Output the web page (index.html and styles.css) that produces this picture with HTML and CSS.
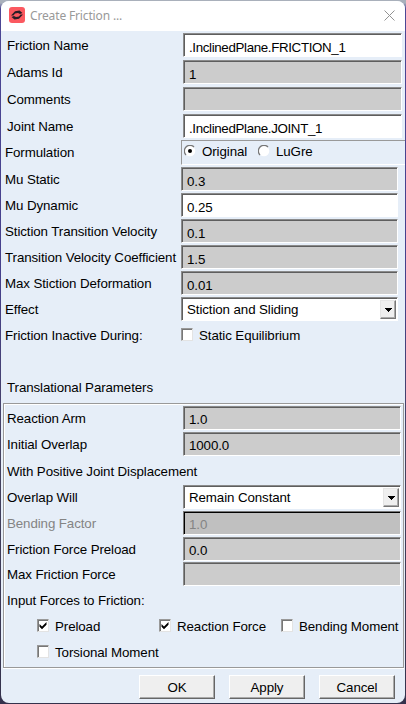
FILE: index.html
```html
<!DOCTYPE html>
<html lang="en">
<head>
<meta charset="utf-8">
<title>Create Friction ...</title>
<link rel="stylesheet" href="styles.css">
</head>
<body>
<main class="window">
  <header class="titlebar">
    <svg class="logo" width="16" height="16" viewBox="0 0 16 16"><rect width="16" height="16" rx="3" fill="#fb5960"/><path d="M2 8.500 6 4.300l4.500-.8L13.500 6l-2.500 1-2-1-3 .6L4.500 8.500z M14 7.500 10 11.700l-4.500.8L2.500 10l2.500-1 2 1 3-.6 1.500-1.900z" fill="#281e27"/></svg>
    <h1 class="title">Create Friction ...</h1>
    <svg class="close" width="11" height="11" viewBox="0 0 11 11"><path d="M.5.5l10 10M10.500.5l-10 10" stroke="#929292" fill="none"/></svg>
  </header>

  <section class="names">
    <div class="row"><span class="label">Friction Name</span><div class="field white name">.InclinedPlane.FRICTION_1</div></div>
    <div class="row"><span class="label">Adams Id</span><div class="field">1</div></div>
    <div class="row"><span class="label">Comments</span><div class="field"></div></div>
    <div class="row"><span class="label">Joint Name</span><div class="field white name">.InclinedPlane.JOINT_1</div></div>
  </section>

  <section class="settings">
    <div class="row formulation"><span class="label">Formulation</span>
      <div class="radios">
        <svg class="radio" width="12" height="12" viewBox="0 0 12 12"><circle cx="6" cy="6" r="5.300" fill="#fff"/><path d="M2 10A5.500 5.500 0 0 1 10 2" fill="none" stroke="#777" stroke-width="1.300"/><circle cx="6" cy="6" r="2" fill="#000"/></svg>
        <span class="original">Original</span>
        <svg class="radio" width="12" height="12" viewBox="0 0 12 12"><circle cx="6" cy="6" r="5.300" fill="#fff"/><path d="M2 10A5.500 5.500 0 0 1 10 2" fill="none" stroke="#777" stroke-width="1.300"/></svg>
        <span class="lugre">LuGre</span>
      </div>
    </div>
    <div class="row"><span class="label">Mu Static</span><div class="field">0.3</div></div>
    <div class="row"><span class="label">Mu Dynamic</span><div class="field white">0.25</div></div>
    <div class="row"><span class="label">Stiction Transition Velocity</span><div class="field">0.1</div></div>
    <div class="row"><span class="label">Transition Velocity Coefficient</span><div class="field">1.5</div></div>
    <div class="row"><span class="label">Max Stiction Deformation</span><div class="field">0.01</div></div>
    <div class="row"><span class="label">Effect</span><div class="field white select"><span>Stiction and Sliding</span><i class="drop"><svg width="7" height="4" viewBox="0 0 7 4" shape-rendering="crispEdges"><path d="M0 0h7v1H6v1H5v1H4v1H3V3H2V2H1V1H0z"/></svg></i></div></div>
    <div class="row"><span class="label">Friction Inactive During:</span><div class="check"><i class="box"></i><span>Static Equilibrium</span></div></div>
  </section>

  <h2 class="heading">Translational Parameters</h2>
  <section class="group">
    <div class="row"><span class="label">Reaction Arm</span><div class="field">1.0</div></div>
    <div class="row"><span class="label">Initial Overlap</span><div class="field">1000.0</div></div>
    <div class="row displacement"><span class="label">With Positive Joint Displacement</span></div>
    <div class="row"><span class="label">Overlap Will</span><div class="field white select"><span>Remain Constant</span><i class="drop"><svg width="7" height="4" viewBox="0 0 7 4" shape-rendering="crispEdges"><path d="M0 0h7v1H6v1H5v1H4v1H3V3H2V2H1V1H0z"/></svg></i></div></div>
    <div class="row disabled"><span class="label">Bending Factor</span><div class="field">1.0</div></div>
    <div class="row preload"><span class="label">Friction Force Preload</span><div class="field">0.0</div></div>
    <div class="row"><span class="label">Max Friction Force</span><div class="field"></div></div>
    <div class="row"><span class="label">Input Forces to Friction:</span></div>
    <div class="checks">
      <div class="check"><i class="box"><svg width="8" height="8" viewBox="0 0 8 8"><path d="M.5 2v2.800L3 7.300l4.500-4.500V0L3 4.500z"/></svg></i><span>Preload</span></div>
      <div class="check"><i class="box"><svg width="8" height="8" viewBox="0 0 8 8"><path d="M.5 2v2.800L3 7.300l4.500-4.500V0L3 4.500z"/></svg></i><span>Reaction Force</span></div>
      <div class="check"><i class="box"></i><span>Bending Moment</span></div>
      <div class="check"><i class="box"></i><span>Torsional Moment</span></div>
    </div>
  </section>
  <footer class="actions"><button class="button">OK</button><button class="button">Apply</button><button class="button">Cancel</button></footer>
</main>
</body>
</html>
```
FILE: styles.css
```css
* { box-sizing: border-box; }
html { background: linear-gradient(#a9b0bb 0 3px, #4c4795 9px, #45408b 40%, #45425f 65%, #34314c); }
body { margin: 0; height: 704px; padding: 1px; overflow: hidden; font: 13.33px/16px "Liberation Sans", Arial, sans-serif; color: #000; letter-spacing: -.1px; }
svg { display: block; flex: none; }
.window { height: 702px; background: #e6eef8; border-radius: 8px; overflow: hidden; }
.titlebar { height: 30px; background: #fff; display: flex; align-items: center; padding: 0 9px 0 8px; }
.title { flex: 1; margin: 0 0 0 5px; font: 12px/16px "Noto Sans", sans-serif; color: #999; letter-spacing: -.15px; }
.logo { margin-top: -2px; }
.close { margin-right: 1px; margin-top: -2px; }
.row { display: flex; height: 26px; align-items: flex-start; white-space: nowrap; }
.label { flex: none; width: 176px; padding-top: 5px; }
.field { height: 24px; width: 217px; padding: 6px 0 0 5px; background: #ccc; border: 1px solid; border-color: #8b8b8b #fff #fff #8b8b8b; box-shadow: inset 1px 1px #5e5e5e; }
.white { background: #fff; }
.name { letter-spacing: -.35px; }
.names { padding: 2px 0 0 6px; height: 109px; }
.names .row { height: 27px; }
.names .field { width: 219px; }
.settings { padding-left: 4px; height: 236px; }
.formulation { height: 27px; }
.radios { height: 25px; width: 225px; flex: none; border: 1px solid; border-color: #999 #fff #fff #999; display: flex; padding: 3px 0 0 2px; }
.radio { margin-top: 1px; }
.original { margin-left: 6px; width: 56px; }
.lugre { margin-left: 6px; }
.drop { position: absolute; top: 2px; right: 1px; width: 16px; height: 19px; background: #efefef; border: 1px solid; border-color: #e5e5e5 #777 #777 #e5e5e5; box-shadow: inset -1px -1px #aaa; display: grid; place-items: center; }
.check { display: flex; padding-top: 5px; }
.box { flex: none; width: 12px; height: 13px; margin: 0 6px 0 0; background: #fff; border: 1px solid; border-color: #999 #e3e3e3 #e3e3e3 #999; box-shadow: inset 1px 1px #777; display: grid; place-items: center; }
.heading { margin: 0; height: 27px; padding: 4px 0 0 6px; font: inherit; }
.group { width: 401px; height: 265px; margin-left: 2px; padding: 2px 0 0 3px; border: 1px solid #999; box-shadow: inset 1px 1px #fff, 0 1px #fff; }
.group .field { width: 218px; padding-top: 5px; }
.settings .select { position: relative; padding-top: 4px; }
.group .select { position: relative; padding-top: 4px; }
.group .displacement { height: 27px; }
.group .displacement .label { padding-top: 6px; }
.disabled { color: #848484; }
.disabled .field { background: #c0c0c0; border-color: #777 #fff #fff #777; box-shadow: inset 1px 1px #000; }
.group .preload { height: 25px; }
.checks { display: grid; grid-template-columns: 122px 122px 120px; grid-auto-rows: 26px; padding-left: 30px; white-space: nowrap; }
.actions { display: flex; gap: 14px; padding: 7px 0 0 138px; }
.button { width: 76px; height: 24px; padding: 1px 0 0; background: #efefef; font: inherit; letter-spacing: inherit; color: #000; border: 1px solid; border-color: #fff #666 #666 #fff; box-shadow: inset -1px -1px #aaa; }
```
